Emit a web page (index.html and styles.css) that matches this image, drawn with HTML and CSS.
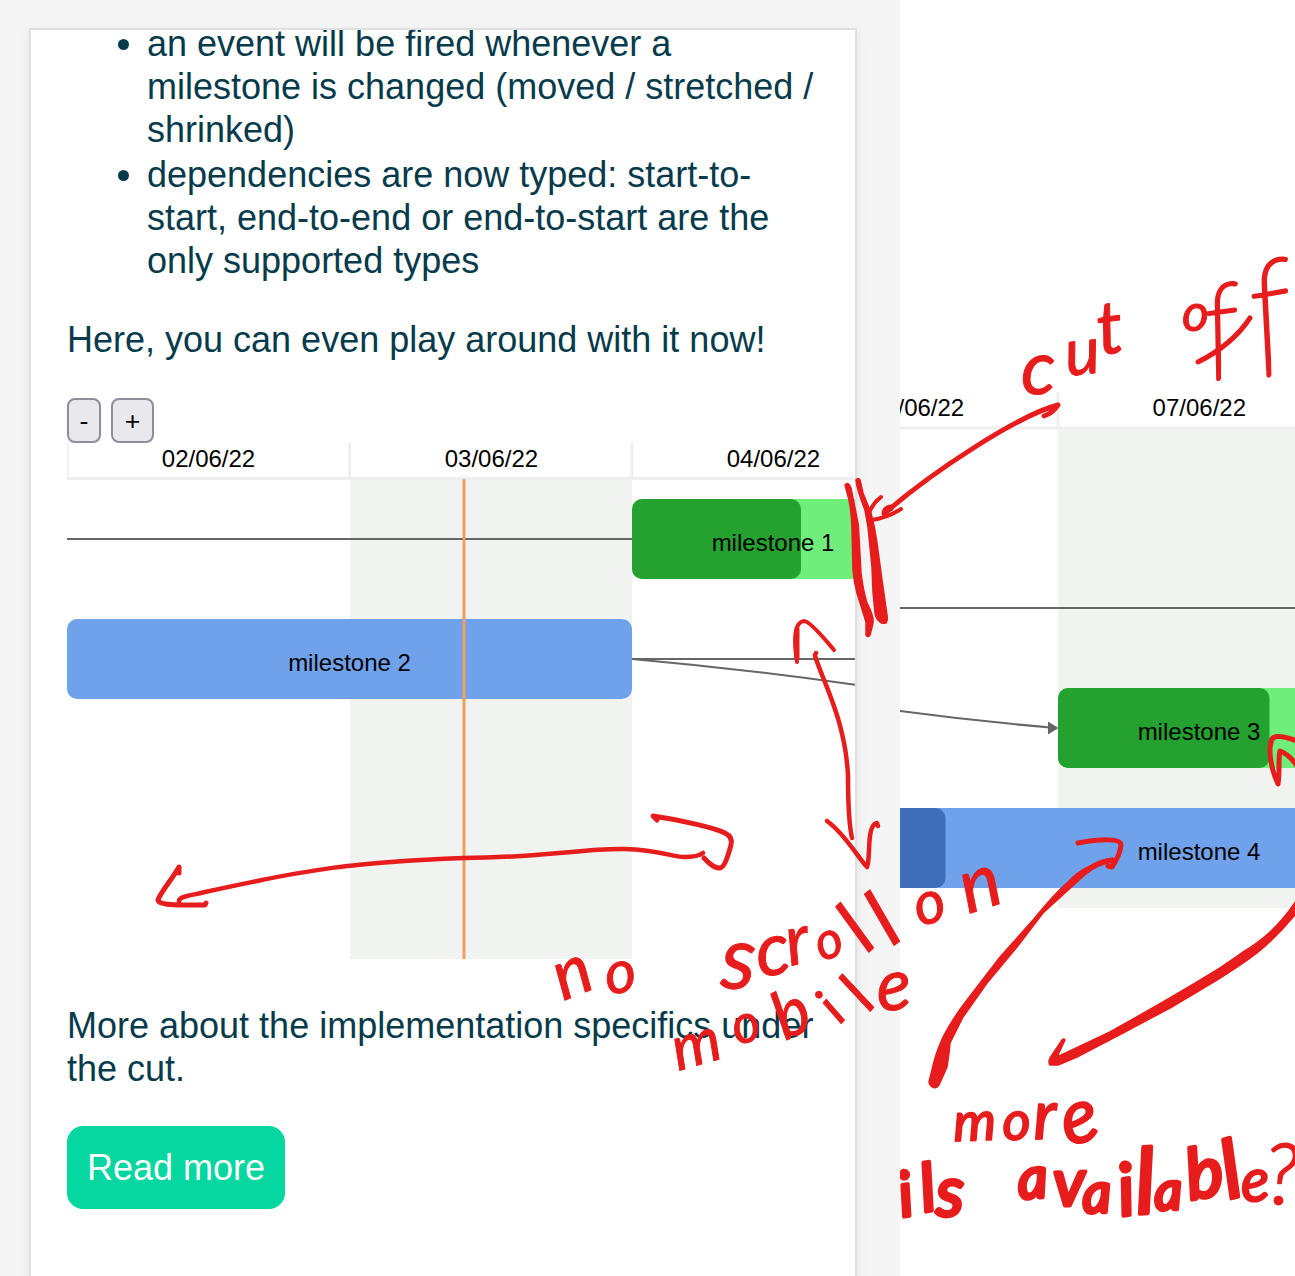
FILE: index.html
```html
<!DOCTYPE html>
<html lang="en">
<head>
<meta charset="utf-8">
<title>Gantt chart review</title>
<link rel="stylesheet" href="styles.css">
</head>
<body>
<main class="board">
  <section class="phone">
    <article class="card">
      <ul class="features">
        <li>an event will be fired whenever a milestone is changed (moved / stretched / shrinked)</li>
        <li>dependencies are now typed: start-to-start, end-to-end or end-to-start are the only supported types</li>
      </ul>
      <p class="intro">Here, you can even play around with it now!</p>
      <div class="zoom-buttons"><button class="zoom-button">-</button><button class="zoom-button">+</button></div>
      <svg class="chart" width="788" height="516" viewBox="67 443 788 516">
        <path d="M350 479H632V959H350Z" fill="#f0f3ef"/>
        <path d="M67 478.5H855M67.2 443V479M349.7 443V479M631.8 443V479" class="grid-line"/>
        <path d="M67 539H632M632 659H855M632 659Q744 669 855 684.7" class="link"/>
        <rect x="632" y="499" width="283" height="80" rx="10" fill="#6fee7c"/>
        <rect x="632" y="499" width="169" height="80" rx="10" fill="#24a12f"/>
        <rect x="67" y="619" width="565" height="80" rx="10" fill="#70a1eb"/>
        <path d="M464 479V959" stroke="#ef9f60" stroke-width="3"/>
        <g class="chart-label">
          <text x="208.5" y="467">02/06/22</text><text x="491.4" y="467">03/06/22</text><text x="773.4" y="467">04/06/22</text>
          <text x="773" y="551">milestone 1</text><text x="349.5" y="671">milestone 2</text>
        </g>
      </svg>
      <p class="outro">More about the implementation specifics under the cut.</p>
      <a class="read-more">Read more</a>
    </article>
  </section>
  <section class="desktop">
    <svg class="chart" width="395" height="516" viewBox="900 392 395 516">
      <path d="M1058 428H1295V908H1058Z" fill="#f0f3ef"/>
      <path d="M900 428H1295M1058 392V428" class="grid-line"/>
      <path d="M900 608H1295M900 711Q975 721 1050 727.5" class="link"/>
      <path d="M1048 721.5L1058.5 728L1048 734.5Z" fill="#666"/>
      <rect x="1058" y="688" width="283" height="80" rx="10" fill="#6fee7c"/>
      <rect x="1058" y="688" width="211.5" height="80" rx="10" fill="#24a12f"/>
      <rect x="850" y="808" width="500" height="80" fill="#70a1eb"/>
      <rect x="850" y="808" width="95.5" height="80" rx="10" fill="#3d6eb7"/>
      <g class="chart-label">
        <text x="917.5" y="416">06/06/22</text><text x="1199.3" y="416">07/06/22</text>
        <text x="1199" y="740">milestone 3</text><text x="1199" y="860">milestone 4</text>
      </g>
    </svg>
  </section>
  <svg class="ink" width="1295" height="1276" viewBox="0 0 1295 1276">
    <defs><clipPath id="desktop-clip"><rect x="900" y="1100" width="395" height="176"/></clipPath></defs>
    <!-- brush strokes that swell along their length -->
    <g class="brush">
      <path d="M845 485L849 500Q852 515 852 530L853 570Q854 582 857 593L866 622V635Q868 638 870 635L873 623Q874 616 867 603Q863 590 861 573L859 537Q859 525 856 513L851 488Q848 481 845 485Z"/>
      <path d="M856 480Q858 477 860 480L863 493L871 513Q875 528 877 543L882 580L887 615Q888 621 886 623Q882 624 880 622Q876 619 875 613L873 592L872 567L868 527L865 510Q857 490 856 480Z"/>
      <path d="M929 1082L932 1070Q935 1055 943 1037Q953 1018 967 1000L1000 957L1033 920Q1055 893 1067 883Q1077 872 1090 866Q1101 859 1113 858L1115 862Q1103 863 1093 869Q1084 875 1077 882L1043 913L1017 947L987 983L963 1017L950 1043L949 1053L947 1067L939 1085Q935 1090 931 1086Q929 1084 929 1082Z"/>
      <path d="M1298 898Q1285 918 1270 932Q1258 943 1243 952Q1221 968 1197 982L1163 1002L1110 1032L1057 1057L1065 1040Q1064 1038 1062 1040L1050 1058Q1048 1062 1050 1065H1058L1077 1057L1123 1033L1170 1008L1217 980Q1240 966 1257 953Q1278 936 1298 911Z"/>
    </g>
    <g class="pen">
      <path d="M1058 405C1019 415 935 470 886 512M1058 405Q1053 413 1044 416"/>
      <path d="M901 509Q887 518 871 520M881 497Q873 503 869 513" stroke-width="4"/>
      <path d="M890 508Q885 510 885 513" stroke-width="7"/>
      <path d="M797 662C793 637 795 622 804 621Q810 621 834 650" stroke-width="4"/>
      <path d="M797 629V658"/>
      <path d="M815 655L816 653M815 656C824 684 845 720 848 775Q848 820 852 838" stroke-width="4.5"/>
      <path d="M827 821C845 834 856 855 867 867C871 858 866 825 877 823L878 826" stroke-width="4.5"/>
      <path d="M179 902C178 896 190 896 205 892C309 869 354 862 464 858C538 858 586 848 624 849S671 857 684 857Q698 857 703 853" stroke-width="4.5"/>
      <path d="M179 873V867C173 878 160 893 158 900C158 906 184 905 205 905L206 903"/>
      <path d="M657 820L653 816C681 820 715 828 725 833Q733 837 731 845C728 856 724 869 719 868Q713 868 704 858"/>
      <path d="M1078 843C1100 839 1121 838 1121 845Q1120 855 1112 867L1108 866"/>
      <path d="M1297 741Q1271 731 1271 743C1268 751 1272 772 1278 784C1280 773 1278 758 1280 751Q1290 755 1297 766"/>
      <path d="M1198 362Q1232 345 1250 318"/>
    </g>
    <!-- notes -->
    <g class="note">
      <text><tspan x="1021" y="394" font-size="76" rotate="0">c</tspan><tspan x="1067" y="376" font-size="66" rotate="-6">u</tspan><tspan x="1100" y="355" font-size="74" rotate="-8">t</tspan></text>
      <text><tspan x="1182" y="331" font-size="52" rotate="0">o</tspan><tspan class="thin" x="1210" y="366" font-size="112" rotate="-8">f</tspan><tspan class="thin" x="1258" y="360" font-size="136" rotate="-10">f</tspan></text>
      <text><tspan x="563" y="1001" font-size="70" rotate="-22">n</tspan><tspan x="608" y="995" font-size="60" rotate="-10">o</tspan></text>
      <text><tspan x="720" y="988" font-size="88" rotate="2">s</tspan><tspan x="759" y="977" font-size="74" rotate="-8">c</tspan><tspan x="790" y="966" font-size="70" rotate="-12">r</tspan><tspan x="822" y="962" font-size="52" rotate="-22">o</tspan><tspan x="867" y="954" font-size="76" rotate="-43">l</tspan><tspan x="892" y="947" font-size="80" rotate="-37">l</tspan></text>
      <text><tspan x="920" y="927" font-size="60" rotate="-18">o</tspan><tspan x="968" y="914" font-size="76" rotate="-18">n</tspan></text>
      <text><tspan x="678" y="1071" font-size="62" rotate="-16">m</tspan><tspan x="738" y="1046" font-size="54" rotate="-20">o</tspan><tspan x="785" y="1041" font-size="66" rotate="-26">b</tspan><tspan x="840" y="1025" font-size="54" rotate="-48">i</tspan><tspan x="869" y="1013" font-size="62" rotate="-50">l</tspan><tspan x="878" y="1011" font-size="72" rotate="-4">e</tspan></text>
      <g class="medium-note"><text><tspan x="954" y="1141" font-size="54" rotate="-2">m</tspan><tspan x="1003" y="1140" font-size="54" rotate="-2">o</tspan><tspan x="1034" y="1139" font-size="68" rotate="-2">r</tspan><tspan x="1067" y="1146" font-size="76" rotate="-14">e</tspan></text></g>
      <g class="bold-note" clip-path="url(#desktop-clip)">
        <text><tspan x="902" y="1217" font-size="62" rotate="-10">i</tspan><tspan x="924" y="1212" font-size="66" rotate="-10">l</tspan><tspan x="936" y="1216" font-size="70" rotate="0">s</tspan></text>
        <text><tspan x="1019" y="1199" font-size="58" rotate="-4">a</tspan><tspan x="1054" y="1206" font-size="66" rotate="-2">v</tspan><tspan x="1083" y="1213" font-size="56" rotate="-2">a</tspan><tspan x="1121" y="1216" font-size="72" rotate="-8">i</tspan><tspan x="1137" y="1214" font-size="90" rotate="-4">l</tspan><tspan x="1155" y="1210" font-size="54" rotate="-2">a</tspan><tspan x="1190" y="1200" font-size="70" rotate="-10">b</tspan><tspan x="1229" y="1199" font-size="80" rotate="-15">l</tspan></text>
      </g>
      <g class="medium-note"><text><tspan x="1242" y="1202" font-size="60" rotate="-4">e</tspan><tspan class="light" x="1265" y="1204" font-size="84" rotate="0">?</tspan></text></g>
    </g>
  </svg>
</main>
</body>
</html>
```
FILE: styles.css
```css
* { box-sizing: border-box; }
body { margin: 0; background: #fff; color: #073b4c; font: 36px/43px "Liberation Sans", Arial, sans-serif; }
.board { position: relative; display: grid; grid-template-columns: 900px 395px; height: 1276px; overflow: hidden; }
.phone { padding: 28px 43px 0 29px; background: #f5f5f5; overflow: hidden; }
.card { height: 1300px; padding-left: 36px; overflow: hidden; background: #fff; border: 2px solid #e0e0e0; box-shadow: 0 4px 10px rgba(0,0,0,.08); }
.features { margin: -8px 0 0; padding: 0 30px 0 80px; }
.features li + li { margin-top: 2px; }
.intro { margin: 36px 0 0; }
.zoom-buttons { display: flex; gap: 10px; height: 45px; margin-top: 37px; }
.zoom-button { height: 45px; padding: 0 10px; border: 2px solid #8f8c9c; border-radius: 8px; background: #e9e8ed; color: #000; font: 26.7px/40px "Liberation Sans", Arial, sans-serif; }
.zoom-button:first-child { width: 34px; }
.zoom-button:last-child { width: 43px; }
.chart { display: block; }
.grid-line { stroke: #eeefee; stroke-width: 3; }
.link { fill: none; stroke: #666; stroke-width: 2; }
.chart-label { font-size: 24px; text-anchor: middle; fill: #000; }
.outro { margin: 45px 0 0; }
.read-more { display: inline-block; margin-top: 36px; padding: 20px; border-radius: 16px; background: #06d6a0; color: #fff; }
.desktop { padding-top: 392px; background: #fff; }
.ink { position: absolute; top: 0; left: 0; pointer-events: none; }
.brush { fill: #e71c1c; stroke: #e71c1c; stroke-width: 1.5; stroke-linejoin: round; }
.pen { fill: none; stroke: #e71c1c; stroke-width: 5; stroke-linecap: round; stroke-linejoin: round; }
.note { fill: #e71c1c; stroke: #e71c1c; stroke-width: 1; stroke-linejoin: round; font-family: Lato, sans-serif; font-style: italic; }
.thin { font-weight: 100; stroke-width: 4; }
.light { font-weight: 300; }
.medium-note { stroke-width: 2; }
.bold-note { stroke-width: 4; }
```
